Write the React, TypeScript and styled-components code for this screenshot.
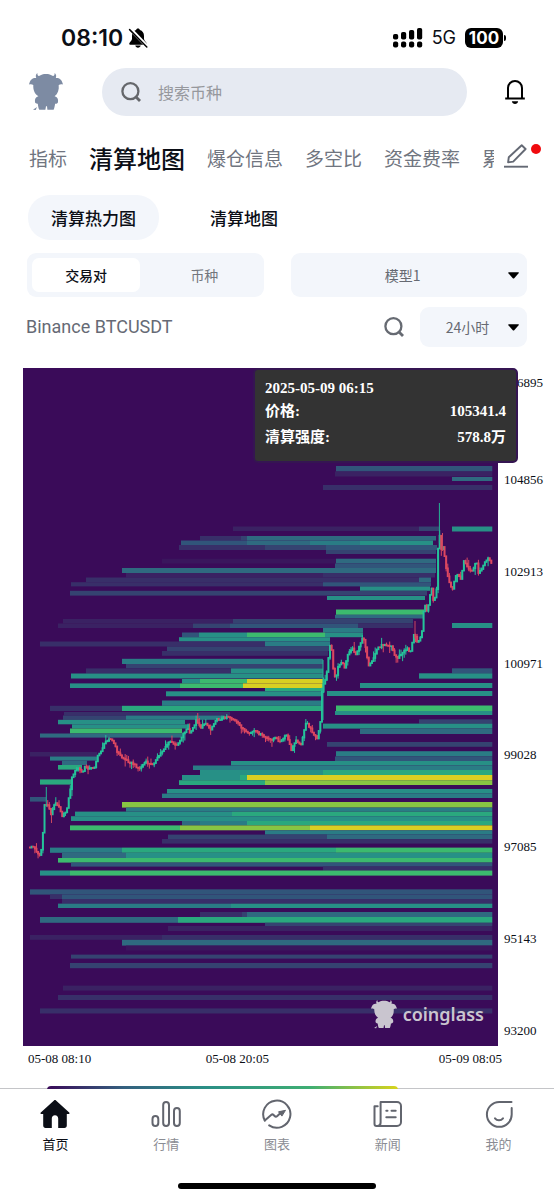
import React from "react";
import styled, { createGlobalStyle, css } from "styled-components";

const sans = `Inter, "Noto Sans CJK SC", sans-serif`;
const cjk = `"Noto Sans CJK SC", sans-serif`;
const serif = `"Liberation Serif", "Noto Sans CJK SC", serif`;

const GlobalStyle = createGlobalStyle`
  *, *::before, *::after { box-sizing: border-box; }
  body { margin: 0; background: #fff; color: #0b0e16; font-family: ${cjk}; }
  button, input, select { font: inherit; color: inherit; border: 0; padding: 0; margin: 0; background: none; }
  button { cursor: pointer; }
  svg { display: block; flex: none; }
`;

const Screen = styled.div`
  display: flex;
  flex-direction: column;
  min-height: 100vh;
  overflow: hidden;
`;

/* ---------- status bar ---------- */

const StatusBar = styled.div`
  display: flex;
  align-items: center;
  justify-content: space-between;
  height: 60px;
  padding: 16px 48px 0 61px;
  font-family: ${sans};
`;
const StatusGroup = styled.div<{ $gap: number }>`
  display: flex;
  align-items: center;
  gap: ${(p) => p.$gap}px;
`;
const Clock = styled.span`
  font-size: 23px;
  font-weight: 600;
  line-height: 28px;
`;
const Network = styled.span`
  font-size: 18px;
  line-height: 22px;
`;
const Battery = styled.span`
  display: flex;
  align-items: center;
  &::before {
    content: "100";
    width: 38px;
    height: 20px;
    border-radius: 6px;
    background: #000;
    color: #fff;
    font-size: 17px;
    font-weight: 700;
    line-height: 20px;
    text-align: center;
  }
  &::after {
    content: "";
    width: 2px;
    height: 6px;
    margin-left: 1px;
    border-radius: 0 2px 2px 0;
    background: #000;
  }
`;

/* ---------- header ---------- */

const Header = styled.header`
  display: flex;
  align-items: center;
  padding: 8px 29px 0 29px;
`;
const SearchBox = styled.label`
  display: flex;
  align-items: center;
  flex: 1;
  height: 48px;
  margin: 0 38px 0 39px;
  padding: 0 19px;
  gap: 17px;
  border-radius: 24px;
  background: #e6eaf2;
`;
const SearchInput = styled.input`
  flex: 1;
  min-width: 0;
  height: 32px;
  outline: none;
  font-size: 16px;
  &::placeholder { color: #96989d; opacity: 1; }
`;
const IconButton = styled.button`
  display: flex;
  align-items: center;
  justify-content: center;
`;

const Tabs = styled.nav`
  display: flex;
  align-items: center;
  height: 48px;
  margin-top: 18px;
  padding: 0 13px 0 29px;
`;
const TabScroller = styled.div`
  display: flex;
  align-items: center;
  flex: 1;
  min-width: 0;
  gap: 22px;
  overflow: hidden;
`;
const Tab = styled.button<{ $active?: boolean }>`
  flex: none;
  font-size: 19px;
  line-height: 36px;
  color: #70757f;
  white-space: nowrap;
  ${(p) => p.$active && css`
    font-size: 24px;
    font-weight: 500;
    color: #0b0e16;
  `}
`;
const EditButton = styled(IconButton)`
  position: relative;
  margin: 0 13px 4px 10px;
`;
const Dot = styled.span`
  position: absolute;
  top: 0;
  right: -13px;
  width: 10px;
  height: 10px;
  border-radius: 50%;
  background: #f00a0e;
`;

/* ---------- filters ---------- */

const PillRow = styled.div`
  display: flex;
  gap: 28px;
  margin-top: 13px;
  padding: 0 28px;
`;
const Pill = styled.button<{ $active?: boolean }>`
  height: 45px;
  padding: 0 23px;
  border-radius: 22px;
  background: ${(p) => (p.$active ? "#f3f6fb" : "transparent")};
  font-size: 17px;
  font-weight: 500;
`;
const FilterRow = styled.div`
  display: grid;
  grid-template-columns: 1fr 1fr;
  gap: 27px;
  margin-top: 13px;
  padding: 0 27px;
`;
const Segmented = styled.div`
  display: grid;
  grid-template-columns: 1fr 1fr;
  gap: 10px;
  height: 44px;
  padding: 5px;
  border-radius: 9px;
  background: #f3f6fb;
`;
const Segment = styled.button<{ $active?: boolean }>`
  border-radius: 7px;
  background: ${(p) => (p.$active ? "#fff" : "transparent")};
  color: ${(p) => (p.$active ? "#0b0e16" : "#73767d")};
  font-size: 14px;
  font-weight: ${(p) => (p.$active ? 500 : 400)};
`;
const SelectBox = styled.div<{ $height: number }>`
  display: grid;
  align-items: center;
  height: ${(p) => p.$height}px;
  border-radius: 9px;
  background: #f3f6fb;
  > * { grid-area: 1 / 1; }
  > svg { justify-self: end; margin-right: 8px; pointer-events: none; }
`;
const Select = styled.select`
  width: 100%;
  height: 100%;
  padding-right: 12px;
  appearance: none;
  color: #666a72;
  font-size: 14px;
  text-align-last: center;
`;
const PairRow = styled.div`
  display: grid;
  grid-template-columns: 1fr auto 107px;
  align-items: center;
  column-gap: 16px;
  margin-top: 10px;
  padding: 0 27px 0 26px;
`;
const Pair = styled.span`
  color: #666a75;
  font-family: Roboto, sans-serif;
  font-size: 18px;
  line-height: 24px;
`;

/* ---------- chart ---------- */

const ChartArea = styled.section`
  display: grid;
  grid-template-columns: 1fr 50px;
  column-gap: 6px;
  position: relative;
  margin-top: 21px;
  padding-left: 23px;
  font-family: ${serif};
`;
const Plot = styled.div`
  position: relative;
  height: 678px;
  background: #3a0b59;
  > svg { width: 100%; height: 100%; }
`;
const PriceAxis = styled.div`
  display: grid;
  grid-template-rows: 31px 1fr;
  height: 678px;
  font-size: 13px;
  line-height: 16px;
`;
const PriceTicks = styled.div`
  display: flex;
  flex-direction: column;
  justify-content: space-between;
  padding: 73px 0 7px;
`;
const TopTick = styled.span`
  padding-top: 7px;
`;
const Watermark = styled.div`
  position: absolute;
  right: 14px;
  bottom: 16px;
  display: flex;
  align-items: center;
  gap: 6px;
  color: #c9c5cf;
  font-family: "Noto Sans", sans-serif;
  font-size: 18px;
  font-weight: 600;
  line-height: 32px;
`;
const Tooltip = styled.dl`
  position: absolute;
  top: 0;
  right: 36px;
  display: grid;
  grid-template-columns: auto auto;
  justify-content: space-between;
  width: 265px;
  margin: 0;
  padding: 8px 10px 11px;
  border: 2px solid #351552;
  border-radius: 5px;
  background: #333;
  color: #fff;
  font-size: 15px;
  font-weight: 700;
  line-height: 26px;
  dt, dd { margin: 0; }
  dd { text-align: right; }
`;
const TooltipTime = styled.dt`
  grid-column: 1 / -1;
  line-height: 20px;
`;
const TimeAxis = styled.div`
  display: grid;
  grid-template-columns: 177fr 232fr auto;
  margin-top: 5px;
  padding: 0 52px 0 28px;
  font-family: ${serif};
  font-size: 13px;
  line-height: 16px;
  white-space: nowrap;
`;
const Legend = styled.div`
  position: relative;
  z-index: 1;
  height: 3px;
  margin: 19px 156px 0 47px;
  overflow: hidden;
  &::before {
    content: "";
    display: block;
    height: 12px;
    border-radius: 4px;
    background: linear-gradient(90deg, #3a0b59, #34607f 22%, #2b8f86 45%, #3fae73 75%, #d8d41c);
  }
`;

/* ---------- bottom navigation ---------- */

const BottomNav = styled.nav`
  margin-top: -1px;
  border-top: 1px solid #c4c5c8;
  background: #fff;
`;
const NavList = styled.div`
  display: grid;
  grid-template-columns: repeat(5, 1fr);
`;
const NavItem = styled.a<{ $active?: boolean }>`
  display: flex;
  flex-direction: column;
  align-items: center;
  gap: 5px;
  padding-top: 10px;
  color: ${(p) => (p.$active ? "#0b0e16" : "#8a8c93")};
  font-size: 13px;
  line-height: 20px;
  text-decoration: none;
  > svg { color: ${(p) => (p.$active ? "#0b0e16" : "#62656e")}; }
`;
const HomeIndicator = styled.div`
  width: 198px;
  height: 6px;
  margin: 29px auto 11px;
  border-radius: 3px;
  background: #000;
`;

/* ---------- drawings ---------- */

const MutedBell = () => (
  <svg width="20" height="20" viewBox="0 0 20 20" aria-hidden="true">
    <path d="M10 .6c-1.100 0-1.800.7-1.900 1.500C5.500 2.900 4 5.100 4 8v3c0 1.600-2.800 3.300-2.800 4.800 0 .6.400.9 1 .9h15.600c.6 0 1-.3 1-.9 0-1.500-2.800-3.200-2.800-4.800V8c0-2.900-1.500-5.100-4.100-5.900C11.800 1.300 11.100.6 10 .6zM7.300 17.600h5.400c-.3 1.300-1.300 2.100-2.700 2.100s-2.400-.8-2.700-2.100z" />
    <path d="M2.500 1.200 19.300 18.600" stroke="#fff" strokeWidth="3.600" />
    <path d="M1.600 1.600 18.800 19" stroke="#000" strokeWidth="1.500" strokeLinecap="round" />
  </svg>
);
const Signal = () => (
  <svg width="30" height="20" viewBox="0 0 30 20" aria-hidden="true">
    {[6, 4, 2, 0].map((top, i) => (
      <g key={top}>
        <rect x={i * 8} y={top} width="5.200" height={11.500 - top} rx="1.800" />
        <rect x={i * 8} y="13.400" width="5.200" height="6" rx="2" />
      </g>
    ))}
  </svg>
);
const Cow = ({ width, height, color }: { width: number; height: number; color: string }) => (
  <svg width={width} height={height} viewBox="0 0 34 38" fill={color} aria-hidden="true">
    <path d="M8.400 0c-.2 1.600.3 2.600 1.600 3.100C12 1.400 14.300.9 17 .9s5 .5 7 2.200c1.300-.5 1.800-1.500 1.600-3.100 1.600 1.100 2 3 1.200 5 3.200-.3 6.100 1.200 7.200 6.600-1.400-.6-2.800-.5-4.300.4.5 4.800-.8 8.900-4.100 11.300C28.300 24 29.500 26 29 29.300c-.7 1.300-1.800 1.700-2.900 1.400-.3 2.600-.9 4.800-1.500 6.100h-6.200l-.4-3.600h-1l-.6 3.600h-6.100c-.8-1.400-1.200-3.600-1.500-6.100-1.200.2-2.200-.2-2.800-1.400-.5-3.300.8-5.300 3.400-6C5.500 20.900 4 16.800 4.300 12 2.900 11.100 1.500 11 0 11.600 1.100 6.200 4 4.700 7.200 5 6.400 3 6.800 1.100 8.400 0z" />
    <path d="M4 36.700 8 34l-1.300 2.900z" />
  </svg>
);
const Magnifier = ({ color }: { color: string }) => (
  <svg width="20" height="20" viewBox="0 0 20 20" fill="none" stroke={color} strokeWidth="2.300" aria-hidden="true">
    <circle cx="9.400" cy="9.200" r="8" />
    <path d="M14.300 14.300 19 19" strokeWidth="2.800" />
  </svg>
);
const Bell = () => (
  <svg width="20" height="26" viewBox="0 0 20 26" aria-hidden="true">
    <path d="M3 19.300V8.900a7 7 0 0 1 14 0v10.400M.2 19.500h19.600" fill="none" stroke="#000" strokeWidth="2" />
    <path d="M6.900 22.300h6.200c-.2 1.700-1.500 2.800-3.100 2.800s-2.900-1.100-3.100-2.800z" />
  </svg>
);
const Pencil = () => (
  <svg width="24" height="24" viewBox="0 0 24 24" fill="none" stroke="#646974" strokeWidth="1.900" aria-hidden="true">
    <path d="M17.700 1.200 21.600 5 9.200 17.600l-5.100.8.700-5.200z" strokeLinejoin="round" />
    <path d="M0 22.700h24" />
  </svg>
);
const Caret = () => (
  <svg width="11" height="7" viewBox="0 0 11 7" aria-hidden="true">
    <path d="M.8.300h9.400c.6 0 .8.500.4 1L6.200 6.200c-.4.400-1 .4-1.400 0L.4 1.300C0 .8.200.3.800.3z" />
  </svg>
);

const HomeIcon = () => (
  <svg width="30" height="30" viewBox="0 0 30 30" fill="currentColor" aria-hidden="true">
    <path d="M14 1.400c.6-.6 1.400-.6 2 0l13.200 12.200c.7.700.4 1.500-.5 1.500h-1.900v11.500c0 1.500-.9 2.400-2.400 2.400h-6.200v-9.600c0-1.900-1.200-3.200-3.200-3.200s-3.200 1.300-3.200 3.200V29H5.600c-1.500 0-2.400-.9-2.400-2.400V15.100H1.300c-.9 0-1.200-.8-.5-1.500z" />
  </svg>
);
const MarketIcon = () => (
  <svg width="30" height="30" viewBox="0 0 30 30" fill="none" stroke="currentColor" strokeWidth="2" aria-hidden="true">
    <rect x="1.500" y="17" width="5.800" height="10" rx="2.900" />
    <rect x="12.200" y="3" width="5.800" height="24" rx="2.900" />
    <rect x="23" y="9" width="5.800" height="18" rx="2.900" />
  </svg>
);
const ChartIcon = () => (
  <svg width="30" height="30" viewBox="0 0 30 30" fill="none" stroke="currentColor" strokeWidth="2" aria-hidden="true">
    <path d="M2.800 21.500A13.600 13.600 0 1 1 7.200 26.400" strokeLinecap="round" />
    <path d="m2.800 21.500 6.600-5.800c.8-.6 1.500-.4 2.200.3l1 1c.8.8 1.800.8 2.700 0l4-3.800" strokeLinecap="round" />
    <path d="m16.500 12.800 7-1.500-3.600 5.800z" fill="currentColor" strokeWidth="1" strokeLinejoin="round" />
  </svg>
);
const NewsIcon = () => (
  <svg width="30" height="30" viewBox="0 0 30 30" fill="none" stroke="currentColor" strokeWidth="2" strokeLinecap="round" aria-hidden="true">
    <path d="M7.600 3H24a4 4 0 0 1 4 4v16a4 4 0 0 1-4 4H3.500a2 2 0 0 1-2-2V7.200h3.200M7.600 3v20.500A3.400 3.400 0 0 1 4.600 27" strokeLinejoin="round" />
    <path d="M13.300 11.700h1.200M18.500 11.700h4.200M13.300 18.300h9.400" />
  </svg>
);
const MineIcon = () => (
  <svg width="30" height="30" viewBox="0 0 30 30" fill="none" stroke="currentColor" strokeWidth="2" strokeLinecap="round" aria-hidden="true">
    <path d="M27.500 3H15.300a12.400 12.400 0 1 0 12.400 12.400V9" />
    <path d="M11 19.300c2 2.600 6 2.600 8 0" />
  </svg>
);

/* ---------- heat map data ---------- */

const levels: Record<string, string> = {
  z: "#3a165d", a: "#3a2263", b: "#382f69", c: "#354371", d: "#31557a", e: "#2f6a80",
  f: "#2a7c85", g: "#279086", h: "#2aa87e", i: "#3cba6e", j: "#88c543", k: "#d9cf22",
};

const END = 492.3;
/* top, bottom, end of the last band, then "x level" for each band */
const rows: [number, number, number, string][] = [
  [466, 471.5, END, "336d"], [471.5, 476.500, END, "335a"], [477, 481, END, "452e"], [485, 490, END, "323b"],
  [526.5, 531, 439, "233a 419c"], [526.5, 531.5, END, "452g"],
  [536, 540.500, 436, "200b 241c 247e"], [540.5, 545, 433, "181d 247e 310f 360g"],
  [545, 550, 437, "179b 265c 326d"], [550, 554, 436, "326c"],
  [558.7, 563.5, 436, "162z 336e"], [563.5, 568, 436, "335d"], [568, 573, 436, "122e"],
  [573, 577.5, 435, "126a 323b"], [577.5, 582.2, 431, "86b 419e"], [582.2, 586.4, 431, "71b 323d"],
  [586.4, 590.8, 430, "360g"], [590.8, 595.6, 427, "70c"], [596, 600, 425, "327g"],
  [609.5, 614.8, 424, "336i"], [614.8, 618.5, 424, "335e"],
  [619, 623.5, 413, "63a 233c"], [623.5, 628, 413, "58a 193c 230d 358b"], [623, 628, END, "452g"],
  [628, 632.5, 363, "323f"], [632.5, 637.2, 363, "182d 199g 247i 325g"], [637.2, 641.5, 330, "179g"],
  [641.5, 646.5, 330, "40b 265f"], [646.5, 651, 330, "167c"], [651, 655.8, 328, "162b"],
  [658.8, 664, 323, "122f"], [664, 668.4, 323, "126c"], [668.4, 673.5, 323, "86b 231g"],
  [673.5, 678.5, 323, "71g"], [679, 683.4, 323, "182g 200i 247k"], [683.4, 688, 323, "70g 180i 243k"],
  [688, 691.300, 323, "265h"], [691.3, 696.3, 323, "166g"],
  [668.3, 673.3, END, "452d"], [673.3, 678.6, END, "419g"], [683, 688, END, "360g"], [691, 696, END, "327g"],
  [705.5, 711, END, "336i"], [711, 715, END, "335g"], [719.3, 723.6, END, "419c"], [723.6, 728.6, END, "323g"],
  [728.9, 734, END, "360e"],
  [700.5, 705.8, 322, "162f"], [705.8, 711, 322, "50b 122h"], [712, 715.5, 230, "64b"], [715.5, 719.8, 225, "63c 126f"],
  [719.8, 724.3, 185, "58g"], [724.3, 728.5, 190, "72g"], [728.5, 733.5, 182, "70i"], [733.5, 737.6, 182, "40e"],
  [752, 756.5, 97, "30a"], [756.5, 760.600, 97, "50f"], [760.6, 765, 87, "62e"], [765, 769.600, 82, "58h"],
  [779.4, 784.6, 73, "40h"], [797, 801.600, 46, "30d"],
  [742, 746.8, END, "327c"], [751.2, 756.5, END, "336f"], [756.5, 761, END, "335d"],
  [761, 765.5, END, "231g"], [765.5, 770, END, "193f"], [770, 775, END, "200g 323h"],
  [775, 780.2, END, "182g 240h 247k"], [780.2, 785, END, "179h 265j"],
  [789, 793.6, END, "167g"], [793.6, 798, END, "162f"], [802, 807.6, END, "122j"], [807.6, 811.6, END, "126f"],
  [811.6, 816.2, END, "75g 232h"], [816.2, 821, END, "71g"], [821, 825.4, END, "182e 200f 247h"],
  [825.4, 830.300, END, "70i 180j 310k"], [830.3, 834.6, END, "265f"], [834.6, 839, END, "168c 327e"],
  [839, 843.6, END, "162b"], [847.6, 852.8, END, "50f 122h 336i"], [852.8, 858, END, "62e 126g"],
  [858, 862.6, END, "58i"], [862.6, 866.6, END, "71d"], [866.6, 870.5, END, "323b"], [870.5, 875.6, END, "40g 70i"],
  [889.3, 894.6, END, "30d"], [894.6, 899, END, "50b 62d"], [899, 903.6, END, "62b"], [903.6, 908, END, "58f 231g"],
  [912, 917, END, "200b 242c 247e"], [917, 922.8, END, "40e 178h"], [922.8, 926, END, "265c"], [926, 931, END, "168a"],
  [935, 939.8, END, "30a 162b"], [939.8, 945.6, END, "122e"], [945.6, 950.500, END, "126z"],
  [954.6, 958.6, END, "71c"], [963, 968.2, END, "70c"], [985.6, 990.6, END, "63a"], [995, 1000, END, "58b"],
  [1008.4, 1013.5, END, "40b"],
];

const HeatRows = () => (
  <g>
    {rows.map(([top, bottom, end, spec], r) => {
      const bands = spec.split(" ");
      return bands.map((band, i) => {
        const x = parseFloat(band);
        const next = i + 1 < bands.length ? parseFloat(bands[i + 1]) : end;
        return <rect key={`${r}-${i}`} x={x} y={top} width={next - x} height={bottom - top} fill={levels[band.slice(-1)]} />;
      });
    })}
  </g>
);

/* turning points of the price, joined by five-minute candles */
const turns: [number, number][] = [
  [29, 848], [33, 846], [37, 851], [41, 856], [43, 842], [45, 806], [48, 804], [50, 809], [52, 815], [54, 806], [57, 803],
  [60, 807], [63, 816], [67, 811], [70, 795], [73, 775], [76, 771], [79, 768], [83, 773], [86, 766], [90, 769], [95, 767],
  [98, 757], [102, 750], [106, 742], [110, 738], [114, 742], [118, 752], [122, 757], [128, 761], [134, 764], [140, 769],
  [146, 762], [152, 765], [157, 760], [162, 752], [168, 744], [172, 741], [175, 746], [180, 742], [183, 735], [188, 728],
  [191, 734], [197, 720], [202, 728], [206, 722], [211, 730], [216, 720], [222, 719], [228, 716], [235, 720], [241, 726],
  [248, 734], [255, 731], [262, 735], [270, 740], [276, 738], [281, 742], [287, 735], [292, 750], [297, 739], [301, 746],
  [307, 722], [310, 727], [313, 732], [318, 739], [321, 722], [323, 684], [325, 683], [328, 670], [330, 645], [332, 647],
  [334, 670], [336, 680], [339, 665], [343, 661], [345, 668], [348, 655], [353, 648], [357, 655], [362, 640], [364, 636],
  [367, 653], [369, 667], [373, 661], [378, 648], [385, 644], [392, 646], [395, 655], [398, 658], [403, 653], [408, 648],
  [411, 653], [415, 632], [418, 642], [422, 637], [424, 613], [425, 604], [428, 612], [432, 587], [434, 602], [437, 593],
  [438, 557], [440, 533], [442, 551], [444, 546], [447, 570], [449, 580], [453, 590], [457, 573], [462, 580], [464, 560],
  [468, 568], [472, 572], [477, 562], [479, 573], [483, 567], [489, 557], [492, 563],
];

const priceAt = (x: number) => {
  for (let i = 1; i < turns.length; i++) {
    const [x0, y0] = turns[i - 1];
    const [x1, y1] = turns[i];
    if (x <= x1) return y0 + ((x - x0) / (x1 - x0)) * (y1 - y0);
  }
  return turns[turns.length - 1][1];
};

const spread = (n: number, salt: number) => {
  const v = Math.sin(n * 12.9898 + salt * 78.233) * 43758.5453;
  return v - Math.floor(v);
};

const candles = Array.from({ length: 287 }, (_, n) => {
  const x = 29 + n * 1.613;
  const jitter = (k: number) => (spread(k, 1) - 0.5) * 2;
  const open = priceAt(x) + jitter(n);
  const close = priceAt(x + 1.613) + jitter(n + 1);
  const high = Math.min(open, close) - spread(n, 2) ** 4 * 7;
  const low = Math.max(open, close) + spread(n, 3) ** 4 * 7;
  return { x, open, close, high, low, color: close < open ? "#25c39a" : "#dc4760" };
});

const Candles = () => (
  <g>
    {candles.map((c) => (
      <g key={c.x} fill={c.color}>
        <rect x={c.x + 0.5} y={c.high} width="1" height={c.low - c.high} />
        <rect x={c.x} y={Math.min(c.open, c.close) - 0.8} width="2" height={Math.abs(c.open - c.close) + 1.6} />
      </g>
    ))}
    <path d="M46.300 787v20M439.400 503v40M323 660v60" stroke="#25b595" strokeWidth="1" />
    <path d="M415 621v18M51.500 813v10M442.500 533v18" stroke="#c9465f" strokeWidth="1" />
  </g>
);

const tabs = ["指标", "清算地图", "爆仓信息", "多空比", "资金费率", "累"];
const priceTicks = ["104856", "102913", "100971", "99028", "97085", "95143", "93200"];
const navItems = [
  { label: "首页", Icon: HomeIcon },
  { label: "行情", Icon: MarketIcon },
  { label: "图表", Icon: ChartIcon },
  { label: "新闻", Icon: NewsIcon },
  { label: "我的", Icon: MineIcon },
];

export default function App() {
  return (
    <Screen>
      <GlobalStyle />
      <StatusBar>
        <StatusGroup $gap={5}>
          <Clock>08:10</Clock>
          <MutedBell />
        </StatusGroup>
        <StatusGroup $gap={9}>
          <Signal />
          <Network>5G</Network>
          <Battery />
        </StatusGroup>
      </StatusBar>

      <Header>
        <Cow width={34} height={38} color="#7d8ba3" />
        <SearchBox>
          <Magnifier color="#65676b" />
          <SearchInput type="search" placeholder="搜索币种" aria-label="搜索币种" />
        </SearchBox>
        <IconButton aria-label="通知"><Bell /></IconButton>
      </Header>

      <Tabs>
        <TabScroller>
          {tabs.map((t) => <Tab key={t} $active={t === "清算地图"}>{t}</Tab>)}
        </TabScroller>
        <EditButton aria-label="编辑"><Pencil /><Dot /></EditButton>
      </Tabs>

      <main>
        <PillRow>
          <Pill $active>清算热力图</Pill>
          <Pill>清算地图</Pill>
        </PillRow>
        <FilterRow>
          <Segmented>
            <Segment $active>交易对</Segment>
            <Segment>币种</Segment>
          </Segmented>
          <SelectBox $height={44}>
            <Select aria-label="模型"><option>模型1</option></Select>
            <Caret />
          </SelectBox>
        </FilterRow>
        <PairRow>
          <Pair>Binance BTCUSDT</Pair>
          <IconButton aria-label="搜索交易对"><Magnifier color="#666a72" /></IconButton>
          <SelectBox $height={40}>
            <Select aria-label="时间范围"><option>24小时</option></Select>
            <Caret />
          </SelectBox>
        </PairRow>

        <ChartArea>
          <Plot>
            <svg viewBox="23 368 475 678" preserveAspectRatio="none" role="img" aria-label="清算热力图">
              <HeatRows />
              <Candles />
            </svg>
            <Watermark>
              <Cow width={26} height={29} color="#c9c5cf" />
              coinglass
            </Watermark>
          </Plot>
          <PriceAxis>
            <TopTick>106895</TopTick>
            <PriceTicks>
              {priceTicks.map((p) => <span key={p}>{p}</span>)}
            </PriceTicks>
          </PriceAxis>
          <Tooltip>
            <TooltipTime>2025-05-09 06:15</TooltipTime>
            <dt>价格:</dt>
            <dd>105341.4</dd>
            <dt>清算强度:</dt>
            <dd>578.8万</dd>
          </Tooltip>
        </ChartArea>
        <TimeAxis>
          <span>05-08 08:10</span>
          <span>05-08 20:05</span>
          <span>05-09 08:05</span>
        </TimeAxis>
        <Legend />
      </main>

      <BottomNav>
        <NavList>
          {navItems.map(({ label, Icon }, i) => (
            <NavItem key={label} href="#" $active={i === 0}>
              <Icon />
              {label}
            </NavItem>
          ))}
        </NavList>
        <HomeIndicator />
      </BottomNav>
    </Screen>
  );
}
